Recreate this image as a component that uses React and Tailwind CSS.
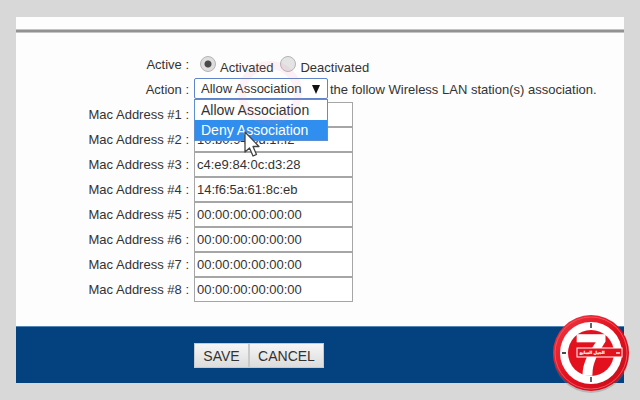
import { useState } from 'react'

const ACTIONS = ['Allow Association', 'Deny Association']

const STATIONS = [
  '',
  '10:b0:94:0d:1f:f2',
  'c4:e9:84:0c:d3:28',
  '14:f6:5a:61:8c:eb',
  '00:00:00:00:00:00',
  '00:00:00:00:00:00',
  '00:00:00:00:00:00',
  '00:00:00:00:00:00',
]

const LABEL = 'w-[173px] shrink-0 text-right'

function Radio({ id, label, checked, onChange }) {
  return (
    <div className="flex h-[25px] items-start gap-1">
      <input
        id={id}
        type="radio"
        name="active"
        checked={checked}
        onChange={onChange}
        className="mt-1 size-4 appearance-none rounded-full border border-[#b4b4b4] bg-[#e4e4e4] checked:bg-[radial-gradient(circle,#4a4a4a_0_3px,#dedede_4px)]"
      />
      <label htmlFor={id} className="pt-2 leading-4">{label}</label>
    </div>
  )
}

function ActionSelect({ value, onChange }) {
  return (
    <div className="relative w-[134px] shrink-0 pt-px pb-[3px]">
      <select
        id="action"
        value={value}
        onChange={e => onChange(e.target.value)}
        className="block h-[21px] w-full appearance-none rounded-xs border border-[#5f84c9] bg-white px-1.5 outline-none"
      >
        {ACTIONS.map(a => <option key={a}>{a}</option>)}
      </select>
      <svg viewBox="0 0 8 9" className="pointer-events-none absolute top-2 right-2 h-[9px] w-2">
        <path d="M0 0h8L4 9z" fill="#111" />
      </svg>

      <ul className="absolute top-[22px] left-0 z-10 w-full border border-[#5b8fd0] bg-white text-sm">
        {ACTIONS.map(a => (
          <li
            key={a}
            className={a === 'Deny Association' ? 'h-5 bg-[#2f8eee] pl-1.5 leading-5 text-white' : 'h-5 pl-1.5 leading-5'}
          >
            {a}
          </li>
        ))}
      </ul>

      {/* click ripple */}
      <div className="pointer-events-none absolute -top-4 left-11 z-20 size-16 rounded-full border-8 border-[#f080a0]/10" />

      <svg viewBox="0 0 16 26" className="pointer-events-none absolute top-[54px] left-[50px] z-30 h-[26px] w-4">
        <path d="M1 1v20l4.5-4 3.5 8 3.500-1.500-3.500-8h6z" fill="#fff" stroke="#444" strokeWidth="1.300" strokeLinejoin="round" />
      </svg>
    </div>
  )
}

function ChannelLogo() {
  return (
    <svg viewBox="0 0 80 84" className="absolute right-[9px] bottom-1 h-[84px] w-20">
      <defs>
        <linearGradient id="rim" x1="0" y1="0" x2="1" y2="1">
          <stop offset="0" stopColor="#ee3b46" />
          <stop offset="0.5" stopColor="#e3101e" />
          <stop offset="1" stopColor="#c80e1a" />
        </linearGradient>
      </defs>
      <circle cx="40" cy="43" r="38" fill="#777" opacity="0.35" />
      <circle cx="40" cy="41" r="38" fill="url(#rim)" />
      <circle cx="40" cy="41" r="36" fill="none" stroke="#f0525d" strokeWidth="1" />
      <circle cx="40" cy="41" r="31" fill="#fff" />
      <circle cx="40" cy="41" r="23" fill="#e3101e" />
      <path d="M40 11v5M40 65v5M11 41h4" stroke="#111" strokeWidth="1.300" />
      <text x="24" y="63" fontFamily="Liberation Sans, sans-serif" fontWeight="bold" fontSize="58" fill="#fff" stroke="#fff" strokeWidth="1.500">7</text>
      <rect x="26" y="36" width="45" height="9" fill="#e3101e" stroke="#fff" strokeWidth="1" />
      <text x="41" y="42" textAnchor="middle" fontFamily="DejaVu Sans, sans-serif" fontWeight="bold" fontSize="4" fill="#fff" stroke="#fff" strokeWidth="0.200">الجيل السابع</text>
      <path d="M65 41h4" stroke="#fff" strokeWidth="1.300" />
    </svg>
  )
}

export default function App() {
  const [active, setActive] = useState(true)
  const [action, setAction] = useState('Allow Association')
  const [stations, setStations] = useState(STATIONS)

  const setStation = (i, value) => setStations(stations.map((s, n) => (n === i ? value : s)))

  return (
    <div className="relative flex min-h-screen flex-col bg-[#d8d8d8] px-4 py-[17px] font-['Liberation_Sans',Arial,sans-serif] text-[13px] text-[#333]">
      <form className="flex flex-1 flex-col bg-[#fdfdfd]" onSubmit={e => e.preventDefault()}>
        <div className="mt-3 border-y border-[#c4c4c4] bg-[#929292] pt-0.5" />

        <div className="flex-1 pt-[19px] pb-6">
          <div className="flex h-[25px] gap-[5px] leading-[25px]">
            <span className={LABEL}>Active :</span>
            <div className="flex gap-[7px] pl-1.5">
              <Radio id="activated" label="Activated" checked={active} onChange={() => setActive(true)} />
              <Radio id="deactivated" label="Deactivated" checked={!active} onChange={() => setActive(false)} />
            </div>
          </div>

          <div className="flex h-[25px] items-center gap-[5px] whitespace-nowrap">
            <label htmlFor="action" className={LABEL}>Action :</label>
            <div className="flex items-center gap-0.5">
              <ActionSelect value={action} onChange={setAction} />
              <span>the follow Wireless LAN station(s) association.</span>
            </div>
          </div>

          {stations.map((mac, i) => (
            <div key={i} className="flex h-[25px] items-center gap-[5px]">
              <label htmlFor={`mac-${i + 1}`} className={LABEL}>Mac Address #{i + 1} :</label>
              <input
                id={`mac-${i + 1}`}
                type="text"
                value={mac}
                onChange={e => setStation(i, e.target.value)}
                className="h-[25px] w-[159px] border border-[#a6a6a6] bg-white px-0.5 outline-none"
              />
            </div>
          ))}
        </div>

        <div className="flex border-t border-[#4f86b5] bg-[#04417f] pt-4 pb-[15px] pl-[178px]">
          <button type="submit" className="h-[25px] w-[55px] border border-[#c9c9c9] bg-linear-to-b from-[#f6f6f6] to-[#dcdcdc] text-sm">
            SAVE
          </button>
          <button type="button" className="h-[25px] w-[75px] border border-[#c9c9c9] bg-linear-to-b from-[#f6f6f6] to-[#dcdcdc] text-sm">
            CANCEL
          </button>
        </div>
      </form>

      <ChannelLogo />
    </div>
  )
}
